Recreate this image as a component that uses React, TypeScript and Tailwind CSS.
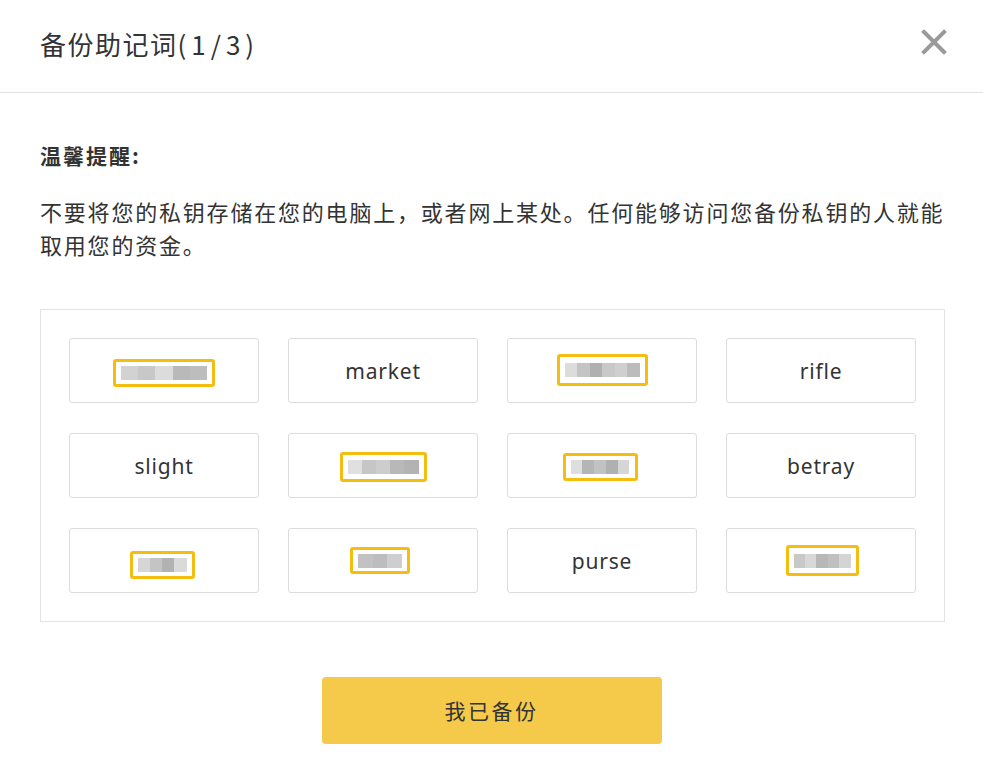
import React from "react";

type Word = { text?: string; blur?: { w: number; h: number; dx?: number; dy?: number; shades: string[] } };

const words: Word[] = [
  { blur: { w: 102, h: 28, dy: 2, shades: ["#d2d2d2", "#c8c8c8", "#dcdcdc", "#b9b9b9", "#bdbdbd"] } },
  { text: "market" },
  { blur: { w: 91, h: 32, dy: -1, shades: ["#dcdcdc", "#c4c4c4", "#b0b0b0", "#c8c8c8", "#cfcfcf", "#bcbcbc"] } },
  { text: "rifle" },
  { text: "slight" },
  { blur: { w: 87, h: 30, dy: 1, shades: ["#e0e0e0", "#c6c6c6", "#cdcdcd", "#b8b8b8", "#b3b3b3"] } },
  { blur: { w: 75, h: 28, dx: -2, dy: 1, shades: ["#dedede", "#b5b5b5", "#c2c2c2", "#b0b0b0", "#d6d6d6"] } },
  { text: "betray" },
  { blur: { w: 65, h: 28, dx: -2, dy: 4, shades: ["#d6d6d6", "#c4c4c4", "#b2b2b2", "#dadada"] } },
  { blur: { w: 60, h: 27, dx: -3, dy: 0, shades: ["#c2c2c2", "#bdbdbd", "#cecece"] } },
  { text: "purse" },
  { blur: { w: 73, h: 31, dx: 1, dy: 0, shades: ["#c8c8c8", "#d8d8d8", "#b7b7b7", "#c0c0c0", "#d4d4d4"] } },
];

function Blur({ w, h, dx = 0, dy = 0, shades }: { w: number; h: number; dx?: number; dy?: number; shades: string[] }) {
  return (
    <div
      className="relative rounded-[3px] border-[3px] border-[#f5bd0f] flex items-center px-[5px]"
      style={{ width: w, height: h, marginLeft: dx * 2, marginTop: dy * 2 }}
    >
      <div className="flex h-[14px] w-full">
        {shades.map((c, i) => (
          <div key={i} className="flex-1 h-full" style={{ backgroundColor: c }} />
        ))}
      </div>
    </div>
  );
}

export default function App() {
  const cjk = { fontFamily: '"Noto Sans CJK SC", "Noto Sans", sans-serif' };
  return (
    <div className="w-[983px] h-[770px] bg-white overflow-hidden text-[#333]" style={cjk}>
      <div className="h-[93px] border-b border-[#e2e2e2] flex items-center justify-between pl-[40px] pr-[36px]">
        <div className="text-[26px] tracking-[1.5px] leading-none text-[#333] -mt-[4px]">
          备份助记词<span className="tracking-[5px]">(1/3)</span>
        </div>
        <svg width="26" height="26" viewBox="0 0 26 26" className="-mt-[8px]">
          <path d="M3 3 L23 23 M23 3 L3 23" stroke="#9a9a9a" strokeWidth="4" strokeLinecap="square" />
        </svg>
      </div>
      <div className="px-[40px]">
        <div className="mt-[48px] text-[21px] leading-[28px] font-bold tracking-[2px] text-[#333]">温馨提醒:</div>
        <p className="mt-[26px] w-[915px] text-[22px] leading-[33px] tracking-[1.8px] text-[#333]">
          不要将您的私钥存储在您的电脑上，或者网上某处。任何能够访问您备份私钥的人就能取用您的资金。
        </p>
        <div className="mt-[48px] w-[905px] border border-[#e3e3e3] p-[28px] grid grid-cols-4 gap-x-[29px] gap-y-[30px]">
          {words.map((w, i) => (
            <div
              key={i}
              className="h-[65px] border border-[#dcdcdc] rounded-[3px] flex items-center justify-center"
            >
              {w.text ? (
                <span
                  className="text-[21px] tracking-[0.8px] text-[#333] mt-[3px]"
                  style={{ fontFamily: '"Noto Sans", "Open Sans", sans-serif' }}
                >
                  {w.text}
                </span>
              ) : (
                <Blur {...w.blur!} />
              )}
            </div>
          ))}
        </div>
        <div className="mt-[55px] flex justify-center">
          <button className="w-[340px] h-[67px] bg-[#f5c94a] rounded-[4px] text-[21px] tracking-[2.5px] text-[#333]">
            我已备份
          </button>
        </div>
      </div>
    </div>
  );
}
